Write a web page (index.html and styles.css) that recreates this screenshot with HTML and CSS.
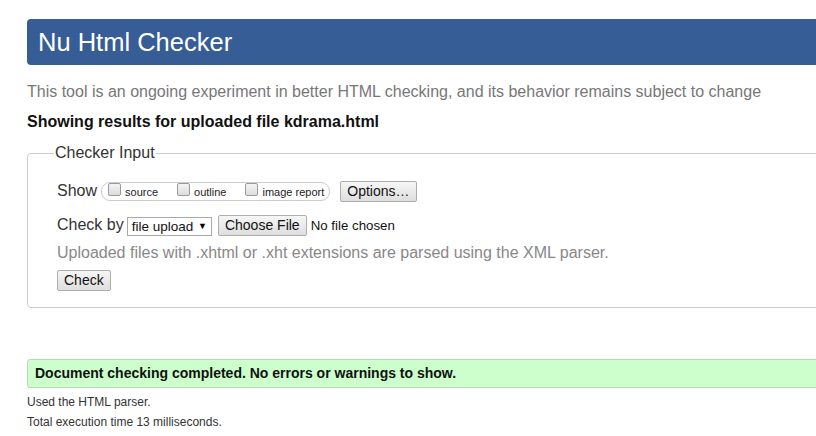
FILE: index.html
```html
<!DOCTYPE html>
<html>
<head>
<meta charset="utf-8">
<title>Nu Html Checker</title>
<link rel="stylesheet" href="styles.css">
</head>
<body>
<div class="page">
  <h1 class="header">Nu Html Checker</h1>
  <p class="intro">This tool is an ongoing experiment in better HTML checking, and its behavior remains subject to change</p>
  <p class="showing">Showing results for uploaded file kdrama.html</p>
  <fieldset class="checker">
    <legend class="legend">Checker Input</legend>
    <div class="row row-show">
      <span class="label">Show</span>
      <div class="pill">
        <span class="opt"><span class="cb"></span><span class="opt-text">source</span></span>
        <span class="opt"><span class="cb"></span><span class="opt-text">outline</span></span>
        <span class="opt"><span class="cb"></span><span class="opt-text">image report</span></span>
      </div>
      <span class="btn btn-options">Options…</span>
    </div>
    <div class="row row-check">
      <span class="label">Check by</span>
      <span class="select">file upload <span class="arrow">▼</span></span>
      <span class="btn btn-file">Choose File</span>
      <span class="nofile">No file chosen</span>
    </div>
    <p class="hint">Uploaded files with .xhtml or .xht extensions are parsed using the XML parser.</p>
    <div class="row row-submit">
      <span class="btn btn-check">Check</span>
    </div>
  </fieldset>
  <div class="success">Document checking completed. No errors or warnings to show.</div>
  <p class="meta">Used the HTML parser.</p>
  <p class="meta">Total execution time 13 milliseconds.</p>
</div>
</body>
</html>
```
FILE: styles.css
```css
html, body {
  margin: 0;
  padding: 0;
  background: #fff;
  overflow: hidden;
}
body {
  font-family: "Liberation Sans", Arial, sans-serif;
  color: #222;
}
.page {
  margin-left: 27px;
  padding-top: 19px;
  width: 880px;
}
.header {
  margin: 0;
  height: 46px;
  line-height: 46px;
  padding-left: 11px;
  background: #365d95;
  color: #fff;
  font-weight: normal;
  font-size: 25.5px;
  border-radius: 4px;
}
.intro {
  margin: 17px 0 0;
  font-size: 16px;
  line-height: 20px;
  color: #777;
}
.showing {
  margin: 10px 0 0;
  font-size: 16px;
  line-height: 20px;
  font-weight: bold;
  color: #111;
}
.checker {
  margin: 12px 0 0;
  padding: 6px 0 16px 29px;
  border: 1px solid #ccc;
  border-radius: 4px;
}
.legend {
  margin-left: -3px;
  padding: 0 1px;
  font-size: 16px;
  line-height: 18px;
  color: #333;
}
.row {
  display: flex;
  align-items: center;
}
.label {
  font-size: 16px;
  color: #333;
}
.row-show {
  height: 24px;
  margin-top: 11px;
}
.pill {
  display: flex;
  align-items: center;
  margin-left: 4px;
  height: 17px;
  border: 1px solid #ccc;
  border-radius: 9px;
  padding: 0 5px 0 6px;
}
.opt {
  display: flex;
  align-items: center;
  margin-right: 19px;
}
.opt:last-child {
  margin-right: 0;
}
.cb {
  width: 11px;
  height: 11px;
  border: 1px solid #9a9a9a;
  border-radius: 2px;
  background: linear-gradient(#f4f4f4, #dcdcdc);
  margin-top: -3px;
}
.opt-text {
  font-size: 11px;
  color: #222;
  margin-left: 4px;
  margin-top: 2px;
}
.btn {
  display: inline-block;
  font-size: 14px;
  color: #111;
  border: 1px solid #adadad;
  border-radius: 2px;
  background: linear-gradient(#f6f6f6, #dedede);
  line-height: 19px;
  padding: 0 6px;
}
.btn-options {
  margin-left: 10px;
}
.row-check {
  height: 22px;
  margin-top: 11px;
}
.select {
  margin-left: 3px;
  border: 1px solid #a9a9a9;
  font-size: 13.5px;
  line-height: 16px;
  padding: 0 4px;
  color: #111;
  background: #fff;
  margin-top: 2px;
}
.arrow {
  font-size: 9px;
  vertical-align: 2px;
  margin-left: 1px;
  color: #000;
}
.btn-file {
  margin-left: 6px;
}
.nofile {
  margin-left: 4px;
  font-size: 13.3px;
  color: #111;
}
.hint {
  margin: 7px 0 0;
  font-size: 16px;
  line-height: 20px;
  color: #888;
}
.row-submit {
  margin-top: 7px;
}
.success {
  margin-top: 51px;
  height: 27px;
  line-height: 27px;
  padding-left: 7px;
  background: #ccffcc;
  border: 1px solid #b6dcb6;
  border-radius: 3px;
  font-size: 14px;
  font-weight: bold;
  color: #111;
}
.meta {
  margin: 7px 0 0;
  font-size: 12px;
  line-height: 14px;
  color: #333;
}
.meta + .meta {
  margin-top: 6px;
}
```
